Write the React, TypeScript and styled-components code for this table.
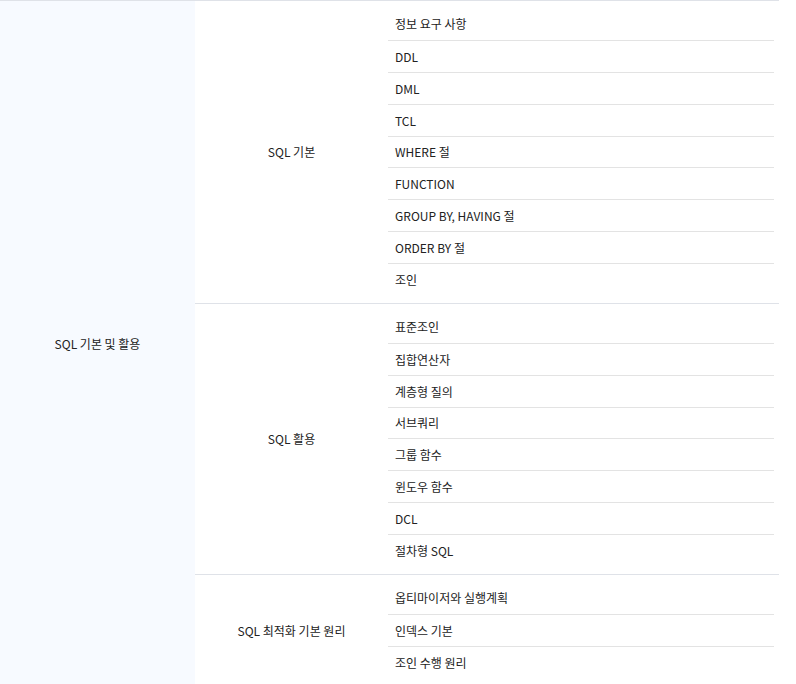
import React from 'react';
import styled, { createGlobalStyle } from 'styled-components';

interface IGroup {
  title: string;
  items: Array<string>;
}

const GlobalStyle = createGlobalStyle`
  html, body {
    margin: 0;
    padding: 0;
    background: #fff;
  }
  body {
    font-family: "Noto Sans CJK KR", "Noto Sans", "Liberation Sans", sans-serif;
    font-size: 12px;
    color: #222;
  }
`;

const Table = styled.div`
  display: flex;
  width: 779px;
  border-top: 1px solid #dfe2e8;
`;

const Category = styled.div`
  width: 195px;
  flex-shrink: 0;
  background: #f7faff;
  display: flex;
  align-items: center;
  justify-content: center;
`;

const Groups = styled.div`
  flex: 1;
  display: flex;
  flex-direction: column;
`;

const Group = styled.div<{ $first?: boolean }>`
  display: flex;
  border-top: ${(p) => (p.$first ? 'none' : '1px solid #dfe2e8')};
`;

const GroupTitle = styled.div`
  width: 193px;
  flex-shrink: 0;
  display: flex;
  align-items: center;
  justify-content: center;
`;

const List = styled.ul`
  flex: 1;
  list-style: none;
  margin: 0 5px 0 0;
  padding: 7px 0 8px;
`;

const Item = styled.li`
  height: 31.875px;
  box-sizing: border-box;
  display: flex;
  align-items: center;
  padding-left: 7px;
  & + & {
    border-top: 1px solid #e3e3e3;
  }
`;

const groups: Array<IGroup> = [
  {
    title: 'SQL 기본',
    items: [
      '정보 요구 사항',
      'DDL',
      'DML',
      'TCL',
      'WHERE 절',
      'FUNCTION',
      'GROUP BY, HAVING 절',
      'ORDER BY 절',
      '조인',
    ],
  },
  {
    title: 'SQL 활용',
    items: [
      '표준조인',
      '집합연산자',
      '계층형 질의',
      '서브쿼리',
      '그룹 함수',
      '윈도우 함수',
      'DCL',
      '절차형 SQL',
    ],
  },
  {
    title: 'SQL 최적화 기본 원리',
    items: ['옵티마이저와 실행계획', '인덱스 기본', '조인 수행 원리'],
  },
];

const App: React.FunctionComponent = () => {
  return (
    <>
      <GlobalStyle />
      <Table>
        <Category>SQL 기본 및 활용</Category>
        <Groups>
          {groups.map((group, index) => (
            <Group key={group.title} $first={index === 0}>
              <GroupTitle>{group.title}</GroupTitle>
              <List>
                {group.items.map((item) => (
                  <Item key={item}>{item}</Item>
                ))}
              </List>
            </Group>
          ))}
        </Groups>
      </Table>
    </>
  );
};

export default App;
